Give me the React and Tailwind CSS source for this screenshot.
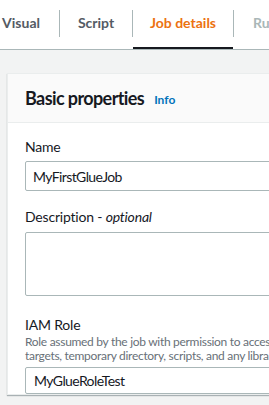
const tabs = [
  { name: 'Visual', width: 'w-[59px]', align: 'justify-end pr-[19px]' },
  { name: 'Script', width: 'w-[72px]', align: 'justify-center' },
  { name: 'Job details', width: 'w-[100px]', align: 'justify-center', active: true },
  { name: 'Runs', width: 'w-[80px]', align: 'justify-start pl-[19px]', disabled: true },
];

const Field = ({ label, optional, help, className = '', children }) => (
  <div className={`flex flex-col ${className}`}>
    <label className="text-[14px] leading-[20px] text-[#16191f] tracking-[-0.2px]">
      {label}
      {optional && (
        <span>
          {' - '}
          <i>optional</i>
        </span>
      )}
    </label>
    {help && (
      <div className="text-[12px] leading-[14px] text-[#687078] whitespace-nowrap tracking-[-0.3px]">
        {help.map((line) => (
          <div key={line}>{line}</div>
        ))}
      </div>
    )}
    {children}
  </div>
);

const App = () => {
  return (
    <div
      className="w-[269px] h-[405px] overflow-hidden bg-[#f2f3f3]"
      style={{ fontFamily: 'Lato, "Open Sans", sans-serif' }}
    >
      {/* Tabs */}
      <div className="bg-white border-b border-[#aab7b8] h-[50px] flex">
        {tabs.map((tab, index) => (
          <div key={tab.name} className="flex h-full shrink-0">
            <div className={`${tab.width} flex flex-col h-full`}>
              <div className={`flex-1 flex items-center ${tab.align} pb-[2px]`}>
                <span
                  className={`text-[14px] font-bold whitespace-nowrap ${
                    tab.active
                      ? 'text-[#ec7211]'
                      : tab.disabled
                      ? 'text-[#aab7b8]'
                      : 'text-[#545b64]'
                  }`}
                >
                  {tab.name}
                </span>
              </div>
              <div className={`h-[2px] ${tab.active ? 'bg-[#16191f]' : ''}`} />
            </div>
            {index < tabs.length - 1 && (
              <div className="w-px h-[27px] mt-[10px] bg-[#aab7b8]" />
            )}
          </div>
        ))}
      </div>

      {/* Card */}
      <div className="pl-[7px] pt-[23px]">
        <div className="w-[400px] bg-white border border-[#eaeded] shadow-[0_1px_1px_0_rgba(0,28,36,0.3)]">
          <div className="h-[49px] bg-[#fafafa] border-b border-[#eaeded] pl-[17px] flex items-center gap-[10px]">
            <h2 className="text-[18px] font-bold text-[#16191f] tracking-[-0.6px]">
              Basic properties
            </h2>
            <span className="text-[12px] font-bold text-[#0073bb] mt-[3px]">Info</span>
          </div>

          <div className="pl-[17px] pt-[14px] flex flex-col">
            <Field label="Name">
              <div className="mt-[4px] h-[30px] border border-[#aab7b8] rounded-[2px] px-[7px] flex items-center text-[14px] text-[#16191f] tracking-[-0.6px]">
                MyFirstGlueJob
              </div>
            </Field>

            <Field label="Description" optional className="mt-[16px]">
              <div className="mt-[5px] h-[64px] border border-[#aab7b8] rounded-[2px]" />
            </Field>

            <Field
              label="IAM Role"
              className="mt-[19px]"
              help={[
                'Role assumed by the job with permission to access your data stores. Ensure that this role has permission to your Amazon S3 sources,',
                'targets, temporary directory, scripts, and any libraries used by the job.',
              ]}
            >
              <div className="mt-[4px] h-[27px] border border-[#aab7b8] rounded-[2px] px-[8px] flex items-center text-[14px] text-[#16191f] tracking-[-0.6px]">
                MyGlueRoleTest
              </div>
            </Field>
          </div>
        </div>
      </div>
    </div>
  );
};

export default App;
